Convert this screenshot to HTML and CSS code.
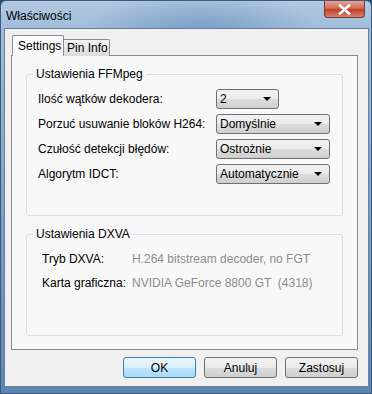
FILE: index.html
```html
<!DOCTYPE html>
<html lang="pl">
<head>
    <meta charset="UTF-8">
    <title>Właściwości</title>
    <link rel="stylesheet" href="styles.css">
</head>
<body>
    <div class="window">
        <div class="titlebar">
            <span class="title">Właściwości</span>
            <div class="close">
                <svg width="13" height="11" viewBox="0 0 13 11">
                    <path d="M2 1.5 L11 9.5 M11 1.5 L2 9.5" stroke="#fff" stroke-width="2.6" stroke-linecap="square"/>
                </svg>
            </div>
        </div>
        <div class="client">
            <div class="tabs">
                <div class="tab active">Settings</div>
                <div class="tab">Pin Info</div>
            </div>
            <div class="panel">
                <div class="group ffmpeg">
                    <div class="group-title">Ustawienia FFMpeg</div>
                    <div class="row">
                        <span class="label">Ilość wątków dekodera:</span>
                        <div class="combo small"><span>2</span><i class="arrow"></i></div>
                    </div>
                    <div class="row">
                        <span class="label">Porzuć usuwanie bloków H264:</span>
                        <div class="combo"><span>Domyślnie</span><i class="arrow"></i></div>
                    </div>
                    <div class="row">
                        <span class="label">Czułość detekcji błędów:</span>
                        <div class="combo"><span>Ostrożnie</span><i class="arrow"></i></div>
                    </div>
                    <div class="row">
                        <span class="label">Algorytm IDCT:</span>
                        <div class="combo"><span>Automatycznie</span><i class="arrow"></i></div>
                    </div>
                </div>
                <div class="group dxva">
                    <div class="group-title">Ustawienia DXVA</div>
                    <div class="info">
                        <span class="label">Tryb DXVA:</span>
                        <span class="value">H.264 bitstream decoder, no FGT</span>
                    </div>
                    <div class="info">
                        <span class="label">Karta graficzna:</span>
                        <span class="value">NVIDIA GeForce 8800 GT &nbsp;(4318)</span>
                    </div>
                </div>
            </div>
            <div class="buttons">
                <button class="btn default">OK</button>
                <button class="btn">Anuluj</button>
                <button class="btn">Zastosuj</button>
            </div>
        </div>
    </div>
</body>
</html>
```

FILE: styles.css
```css
body {
    margin: 0;
    font-family: "Liberation Sans", Arial, sans-serif;
    font-size: 12px;
    color: #000;
    background: #2a4f7a;
}
.window {
    width: 372px;
    height: 394px;
    box-sizing: border-box;
    background:
        radial-gradient(ellipse 120px 40px at 200px 30px, rgba(90, 130, 180, 0.55), transparent),
        linear-gradient(180deg, #b3c9e0 0px, #9fbcdb 30px, #7fa3c9 200px, #5b86b3 394px);
    border: 1px solid #3c5a7c;
    border-radius: 6px 6px 0 0;
    display: flex;
    flex-direction: column;
}
.titlebar {
    height: 27px;
    display: flex;
    justify-content: space-between;
    align-items: flex-start;
    padding: 0 6px 0 5px;
}
.title {
    margin-top: 8px;
    font-size: 12px;
    color: #000;
}
.close {
    width: 41px;
    height: 17px;
    box-sizing: border-box;
    border: 1px solid #6b3a3a;
    border-top: none;
    border-radius: 0 0 4px 4px;
    background: linear-gradient(180deg, #e8a295 0%, #d66a56 45%, #c0402a 55%, #d9826f 100%);
    display: flex;
    justify-content: center;
    align-items: center;
}
.client {
    flex: 1;
    margin: 0 2px 6px 3px;
    background: #f0f0f0;
    border: 1px solid #6a7f97;
    padding: 0 0 0 6px;
}
.tabs {
    display: flex;
    align-items: flex-end;
    margin-top: 6px;
    height: 21px;
    position: relative;
    z-index: 1;
    margin-bottom: -1px;
}
.tab {
    width: 46px;
    height: 17px;
    box-sizing: border-box;
    padding-left: 3px;
    line-height: 16px;
    white-space: nowrap;
    border: 1px solid #898c95;
    border-bottom: none;
    border-left: none;
    border-radius: 0 2px 0 0;
    background: linear-gradient(180deg, #f2f2f2, #dcdcdc);
}
.tab.active {
    height: 21px;
    line-height: 20px;
    width: 52px;
    padding: 0 0 0 5px;
    margin-left: 1px;
    border-left: 1px solid #898c95;
    border-radius: 2px 2px 0 0;
    background: #fafafa;
}
.panel {
    width: 347px;
    height: 295px;
    box-sizing: border-box;
    border: 1px solid #898c95;
    background: #f8f8f8;
    padding: 18px 14px 0 14px;
}
.group {
    border: 1px solid #d5dfe5;
    border-radius: 3px;
}
.group-title {
    width: fit-content;
    margin: -8px 0 0 6px;
    padding: 0 3px;
    line-height: 14px;
    background: #f8f8f8;
}
.ffmpeg {
    height: 142px;
    box-sizing: border-box;
}
.row {
    display: flex;
    align-items: center;
    height: 20px;
    margin-top: 5px;
    padding-left: 11px;
}
.group-title + .row {
    margin-top: 8px;
}
.row .label {
    width: 178px;
}
.combo {
    width: 114px;
    height: 20px;
    box-sizing: border-box;
    border: 1px solid #707070;
    border-radius: 3px;
    background: linear-gradient(180deg, #f2f2f2 0%, #ebebeb 50%, #dddddd 51%, #cfcfcf 100%);
    display: flex;
    align-items: center;
    justify-content: space-between;
    padding: 0 7px 0 3px;
}
.combo.small {
    width: 63px;
}
.arrow {
    width: 0;
    height: 0;
    border-left: 4px solid transparent;
    border-right: 4px solid transparent;
    border-top: 4px solid #000;
}
.dxva {
    margin-top: 18px;
    height: 102px;
    box-sizing: border-box;
}
.info {
    display: flex;
    height: 18px;
    align-items: center;
    margin-top: 6px;
    padding-left: 15px;
}
.group-title + .info {
    margin-top: 9px;
}
.info .label {
    width: 90px;
}
.info .value {
    color: #8d8d8d;
}
.buttons {
    display: flex;
    justify-content: flex-end;
    gap: 8px;
    width: 347px;
    margin-top: 7px;
}
.btn {
    width: 73px;
    height: 21px;
    padding: 0;
    font-family: "Liberation Sans", Arial, sans-serif;
    font-size: 12px;
    color: #000;
    border: 1px solid #707070;
    border-radius: 3px;
    background: linear-gradient(180deg, #f2f2f2 0%, #ebebeb 50%, #dddddd 51%, #cfcfcf 100%);
}
.btn.default {
    border-color: #3c7fb1;
    background: linear-gradient(180deg, #eaf6fd 0%, #d9f0fc 50%, #bee6fd 51%, #a7d9f5 100%);
}
```
